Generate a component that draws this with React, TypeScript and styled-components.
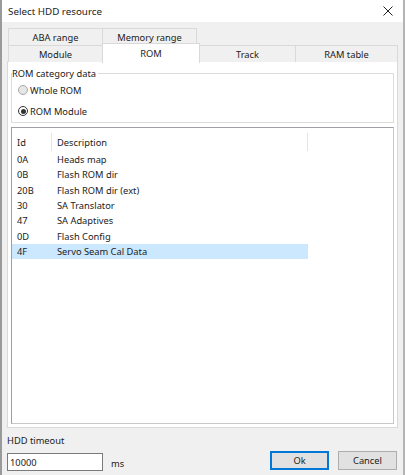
import styled, { createGlobalStyle } from "styled-components";

const GlobalStyle = createGlobalStyle`
    html, body {
        margin: 0;
        padding: 0;
        background: #f0f0f0;
    }
    * {
        box-sizing: border-box;
    }
`;

interface I_RomRow {
    id: string;
    desc: string;
}

const ROM_ROWS: I_RomRow[] = [
    { id: "0A", desc: "Heads map" },
    { id: "0B", desc: "Flash ROM dir" },
    { id: "20B", desc: "Flash ROM dir (ext)" },
    { id: "30", desc: "SA Translator" },
    { id: "47", desc: "SA Adaptives" },
    { id: "0D", desc: "Flash Config" },
    { id: "4F", desc: "Servo Seam Cal Data" },
];

const Window = styled.div`
    width: 405px;
    height: 475px;
    display: flex;
    flex-direction: column;
    background: #f0f0f0;
    border-left: 2px solid #9a9a9a;
    border-right: 2px solid #b4b4b4;
    font-family: "Segoe UI", "Noto Sans", sans-serif;
    font-size: 9.3px;
    color: #1b1b1b;
    overflow: hidden;
`;

const TitleBar = styled.div`
    height: 22px;
    display: flex;
    align-items: center;
    justify-content: space-between;
    padding: 0 10px 0 6px;
    background: #ffffff;
    font-size: 9.8px;
`;

const CloseIcon = styled.svg`
    width: 10px;
    height: 10px;
`;

const Body = styled.div`
    flex: 1;
    display: flex;
    flex-direction: column;
    padding: 6px 5px 0 5px;
`;

const TabRow = styled.div`
    display: flex;
    height: 17px;
    padding-left: 1px;
`;

const Tab = styled.div<{ $width: number; $active?: boolean }>`
    width: ${(p) => p.$width}px;
    display: flex;
    align-items: center;
    justify-content: center;
    border: 1px solid #d9d9d9;
    border-bottom: none;
    margin-right: -1px;
    background: ${(p) => (p.$active ? "#ffffff" : "#f0f0f0")};
    position: relative;
    z-index: ${(p) => (p.$active ? 2 : 1)};
    ${(p) => p.$active && "margin-top: -2px; height: 20px;"}
`;

const Panel = styled.div`
    flex: 1;
    background: #ffffff;
    border: 1px solid #d9d9d9;
    margin-top: -1px;
    display: flex;
    flex-direction: column;
    padding: 5px 3px 3px 3px;
    gap: 4px;
`;

const GroupBox = styled.fieldset`
    margin: 0;
    padding: 2px 6px 3px 6px;
    border: 1px solid #dcdcdc;
    display: flex;
    flex-direction: column;
    gap: 5px;
`;

const Legend = styled.legend`
    padding: 0 2px 0 0;
    margin-left: -6px;
    line-height: 13px;
    background: #ffffff;
`;

const RadioLine = styled.label`
    display: flex;
    align-items: center;
    gap: 2px;
    height: 16px;
`;

const RadioDot = styled.span<{ $checked?: boolean; $muted?: boolean }>`
    width: 10px;
    height: 10px;
    border-radius: 50%;
    border: 1px solid ${(p) => (p.$muted ? "#a8a8a8" : "#333333")};
    display: flex;
    align-items: center;
    justify-content: center;
    background: ${(p) => (p.$muted ? "#e6e6e6" : "#ffffff")};
    &::after {
        content: "";
        width: 5px;
        height: 5px;
        border-radius: 50%;
        background: ${(p) => (p.$checked ? "#333333" : "transparent")};
    }
`;

const ListView = styled.div`
    flex: 1;
    border: 1px solid #9ca0a6;
    border-right-color: #c8c8c8;
    border-bottom-color: #c8c8c8;
    display: flex;
    flex-direction: column;
    padding-top: 1px;
`;

const ListHeader = styled.div`
    display: grid;
    grid-template-columns: 40px 256px 1fr;
    height: 23px;
    padding: 4px 0 1px 0;
    align-items: stretch;
`;

const HeaderCell = styled.div<{ $last?: boolean }>`
    display: flex;
    align-items: center;
    padding-left: 5px;
    border-right: ${(p) => (p.$last ? "none" : "1px solid #e5e5e5")};
`;

const ListRow = styled.div<{ $selected?: boolean }>`
    display: grid;
    grid-template-columns: 40px 256px;
    height: 15.3px;
    align-items: center;
    width: 296px;
    background: ${(p) => (p.$selected ? "#cce8ff" : "transparent")};
`;

const Cell = styled.div`
    padding-left: 5px;
    white-space: nowrap;
`;

const Footer = styled.div`
    height: 47px;
    display: flex;
    align-items: flex-end;
    padding: 0 0 4px 0;
    gap: 8px;
`;

const TimeoutBlock = styled.div`
    display: flex;
    flex-direction: column;
    gap: 6px;
`;

const FieldLabel = styled.span`
    line-height: 12px;
`;

const TimeoutInput = styled.div`
    width: 96px;
    height: 18px;
    border: 1px solid #7a7a7a;
    background: #ffffff;
    display: flex;
    align-items: center;
    padding-left: 2px;
`;

const Unit = styled.span`
    margin-bottom: 1px;
    flex: 1;
`;

const Button = styled.div<{ $primary?: boolean }>`
    width: 59px;
    height: 19px;
    display: flex;
    align-items: center;
    justify-content: center;
    background: #e1e1e1;
    border: ${(p) => (p.$primary ? "2px solid #0078d7" : "1px solid #adadad")};
    margin-bottom: 1px;
`;

const ButtonBox = styled.div`
    display: flex;
    gap: 9px;
    padding-right: 1px;
`;

function App() {
    return (
        <>
            <GlobalStyle />
            <Window>
                <TitleBar>
                    <span>Select HDD resource</span>
                    <CloseIcon viewBox="0 0 10 10">
                        <path d="M0.5 0.5 L9.5 9.5 M9.5 0.5 L0.5 9.5" stroke="#222" strokeWidth="1" fill="none" />
                    </CloseIcon>
                </TitleBar>
                <Body>
                    <TabRow>
                        <Tab $width={95}>ABA range</Tab>
                        <Tab $width={95}>Memory range</Tab>
                    </TabRow>
                    <TabRow>
                        <Tab $width={95}>Module</Tab>
                        <Tab $width={98} $active>ROM</Tab>
                        <Tab $width={97}>Track</Tab>
                        <Tab $width={103}>RAM table</Tab>
                    </TabRow>
                    <Panel>
                        <GroupBox>
                            <Legend>ROM category data</Legend>
                            <RadioLine>
                                <RadioDot $muted />
                                Whole ROM
                            </RadioLine>
                            <RadioLine>
                                <RadioDot $checked />
                                ROM Module
                            </RadioLine>
                        </GroupBox>
                        <ListView>
                            <ListHeader>
                                <HeaderCell>Id</HeaderCell>
                                <HeaderCell>Description</HeaderCell>
                                <HeaderCell $last />
                            </ListHeader>
                            {ROM_ROWS.map((row) => (
                                <ListRow key={row.id} $selected={row.id === "4F"}>
                                    <Cell>{row.id}</Cell>
                                    <Cell>{row.desc}</Cell>
                                </ListRow>
                            ))}
                        </ListView>
                    </Panel>
                    <Footer>
                        <TimeoutBlock>
                            <FieldLabel>HDD timeout</FieldLabel>
                            <TimeoutInput>10000</TimeoutInput>
                        </TimeoutBlock>
                        <Unit>ms</Unit>
                        <ButtonBox>
                            <Button $primary>Ok</Button>
                            <Button>Cancel</Button>
                        </ButtonBox>
                    </Footer>
                </Body>
            </Window>
        </>
    );
}

export default App;
